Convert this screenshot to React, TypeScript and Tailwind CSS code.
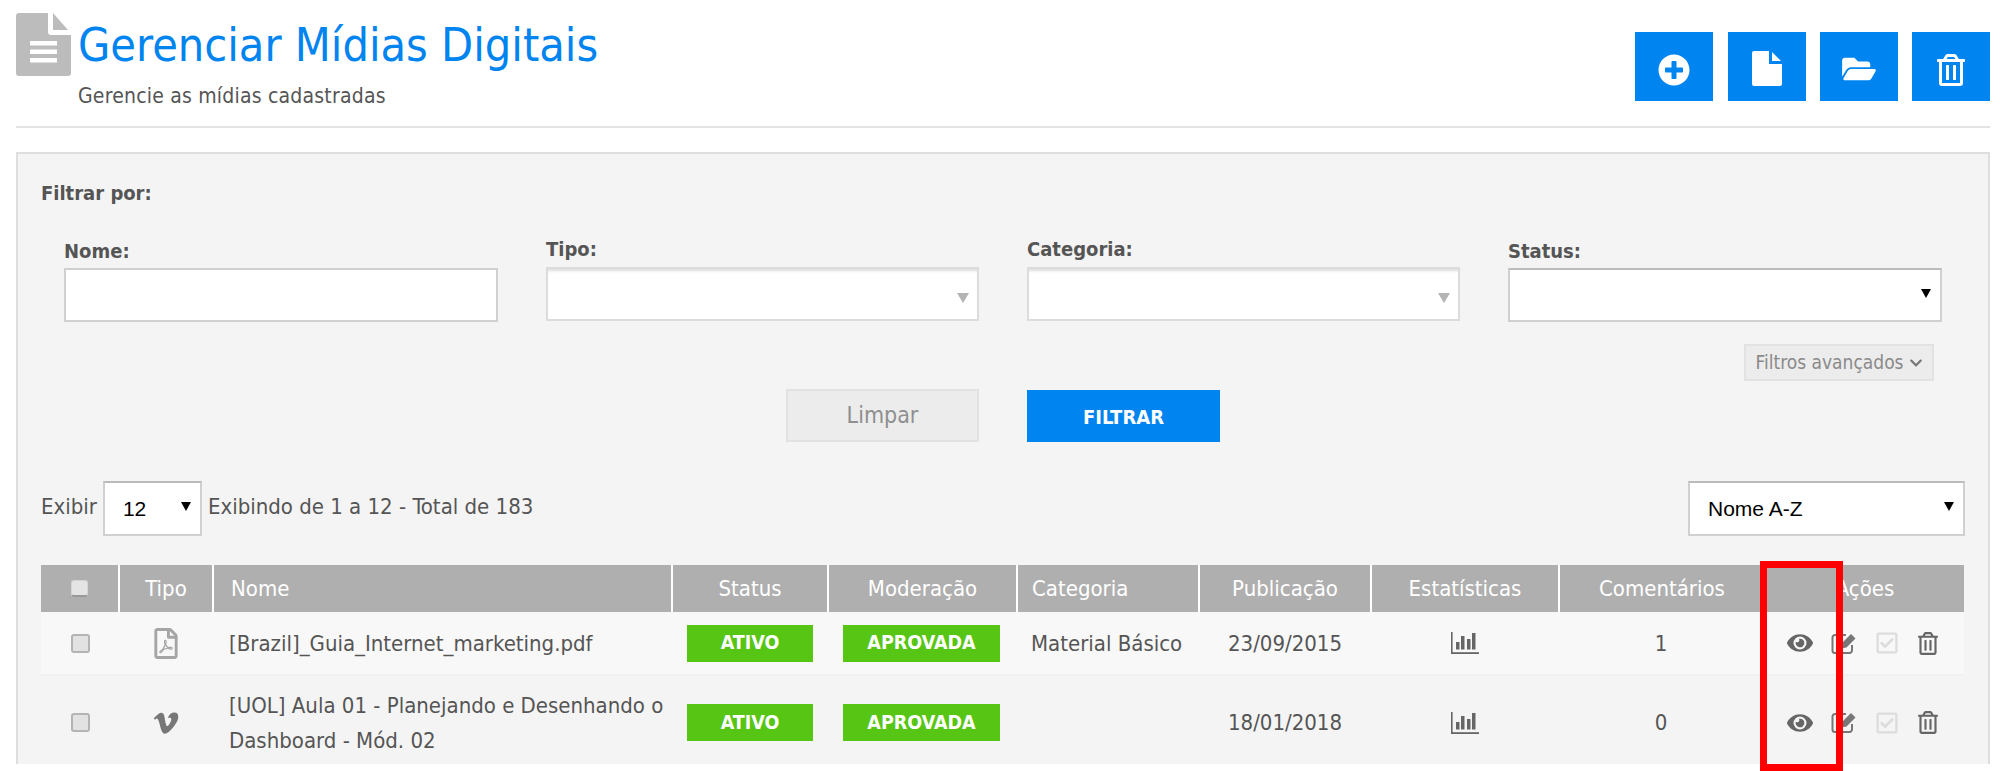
import { FaPlusCircle, FaFolderOpen, FaRegTrashAlt, FaEye, FaRegCheckSquare, FaVimeoV, FaRegFilePdf, FaChevronDown } from "react-icons/fa";

const font = "font-['DejaVu_Sans_Condensed','DejaVu_Sans',sans-serif]";

function Caret({ tone }: { tone: string }) {
  return <span className={`absolute right-[11px] top-[21px] h-0 w-0 border-x-[5px] border-t-[9px] border-x-transparent ${tone}`} />;
}

function Label({ children, className = "" }: { children: string; className?: string }) {
  return <label className={`block text-[20px] leading-[22px] font-bold text-[#555] ${className}`}>{children}</label>;
}

function ChosenBox() {
  return (
    <div className="relative h-[54px] border-2 border-[#dcdcdc] bg-white shadow-[inset_0_4px_3px_-2px_#ddd]">
      <span className="absolute right-[8px] top-[24px] h-0 w-0 border-x-[6px] border-t-[10px] border-x-transparent border-t-[#b4b4b4]" />
    </div>
  );
}

function NativeSelect({ value, className }: { value: string; className: string }) {
  return (
    <div className={`relative ${className}`}>
      <select defaultValue={value} className="h-full w-full appearance-none rounded-none border-2 border-[#d0d0d0] border-t-[#bbb] bg-white pl-[18px] font-['Liberation_Sans',sans-serif] text-[21px] text-black">
        <option value={value}>{value}</option>
      </select>
      <Caret tone="border-t-black" />
    </div>
  );
}

function Badge({ children, w }: { children: string; w: string }) {
  return <span className={`inline-flex h-[37px] items-center justify-center bg-[#57c514] text-[19.5px] font-bold text-white ${w}`}>{children}</span>;
}

function Check({ light = false }: { light?: boolean }) {
  return <span className={`mx-auto block rounded-[3px] ${light ? "h-[17px] w-[17px] border border-b-2 border-[#d4d4d4] border-b-[#999] bg-[#e4e4e4]" : "h-[19px] w-[19px] border-2 border-[#b4b4b4] bg-[#e2e2e2]"}`} />;
}

function EditIcon() {
  return (
    <svg viewBox="0 0 26 21" className="h-[21px] w-[26px] text-[#777]" fill="none">
      <path d="M15 2H4A2.5 2.5 0 0 0 1.5 4.5V17.5A2.5 2.5 0 0 0 4 20H18.5A2.5 2.5 0 0 0 21 17.5V12" stroke="currentColor" strokeWidth="2" />
      <path d="M11 10 20 1l4.5 4.5L15.5 14.5 10 15.5Z" fill="currentColor" />
    </svg>
  );
}

function StatsIcon() {
  return (
    <svg viewBox="0 0 28 22" className="mx-auto h-[22px] w-[28px] text-[#666]" fill="currentColor">
      <rect x="0" y="0" width="1.6" height="22" />
      <rect x="0" y="20.2" width="28" height="1.8" />
      <rect x="5" y="10" width="3.5" height="7.5" />
      <rect x="10" y="4" width="3.5" height="13.5" />
      <rect x="16" y="7" width="3.5" height="10.5" />
      <rect x="21" y="1" width="3.5" height="16.5" />
    </svg>
  );
}

function Actions() {
  return (
    <div className="flex items-center pl-[22px] text-[#666]">
      <FaEye className="h-[26px] w-[26px]" />
      <span className="ml-[18px]"><EditIcon /></span>
      <FaRegCheckSquare className="ml-[18px] h-[24px] w-[24px] text-[#dcdcdc]" />
      <FaRegTrashAlt className="ml-[19px] h-[23px] w-[20px]" />
    </div>
  );
}

const heads: [string, string][] = [
  ["", "w-[78px]"], ["Tipo", "w-[94px]"], ["Nome", "w-[459px] text-left pl-[17px]"], ["Status", "w-[156px]"],
  ["Moderação", "w-[189px]"], ["Categoria", "w-[182px] text-left pl-[14px]"], ["Publicação", "w-[172px]"],
  ["Estatísticas", "w-[188px]"], ["Comentários", "w-[206px]"], ["Ações", "w-[199px]"],
];

function Row({ icon, name, cat, date, count, odd }: { icon: React.ReactNode; name: React.ReactNode; cat: string; date: string; count: string; odd?: boolean }) {
  return (
    <tr className={odd ? "h-[63px] border-b-2 border-[#f0f0f0] bg-[#f8f8f8]" : "h-[94px]"}>
      <td><Check /></td>
      <td className="text-center">{icon}</td>
      <td className="pl-[16px] leading-[35px]">{name}</td>
      <td className="pl-[15px]"><Badge w="w-[126px]">ATIVO</Badge></td>
      <td className="pl-[15px]"><Badge w="w-[157px]">APROVADA</Badge></td>
      <td className="pl-[14px]">{cat}</td>
      <td className="text-center">{date}</td>
      <td><StatsIcon /></td>
      <td className="pr-[2px] text-center">{count}</td>
      <td><Actions /></td>
    </tr>
  );
}

export default function App() {
  return (
    <div className={`relative h-[771px] w-[2000px] overflow-hidden bg-white text-[#555] ${font}`}>
      <div className="pr-[10px] pl-4">
        <header className="flex h-[128px] items-start border-b-2 border-[#e4e4e4]">
          <svg viewBox="0 0 55 63" className="mt-[13px] h-[63px] w-[55px]">
            <path d="M3 0H32V19a3 3 0 0 0 3 3H55V60a3 3 0 0 1-3 3H3a3 3 0 0 1-3-3V3a3 3 0 0 1 3-3Z" fill="#bcbcbc" />
            <path d="M37 0 52 17H37Z" fill="#bcbcbc" />
            <rect x="14" y="28" width="27" height="4.5" fill="#fff" />
            <rect x="14" y="36.5" width="27" height="4.5" fill="#fff" />
            <rect x="14" y="45" width="27" height="4.5" fill="#fff" />
          </svg>
          <div className="ml-[7px] flex-1">
            <h1 className="mt-[20px] text-[46.4px] leading-[50px] text-[#0084f0]">Gerenciar Mídias Digitais</h1>
            <p className="mt-[15px] text-[21px] leading-[22px] tracking-[0.2px] text-[#555]">Gerencie as mídias cadastradas</p>
          </div>
          <div className="mt-[32px] flex text-white">
            <button className="flex h-[69px] w-[78px] items-center justify-center bg-[#0084f0] pt-[7px]"><FaPlusCircle className="h-[32px] w-[32px]" /></button>
            <button className="ml-[15px] flex h-[69px] w-[78px] items-center justify-center bg-[#0084f0] pt-[3px]">
              <svg viewBox="0 0 30 35" className="h-[35px] w-[30px]" fill="#fff">
                <path d="M2 0H17V13H30V33a2 2 0 0 1-2 2H2a2 2 0 0 1-2-2V2a2 2 0 0 1 2-2Z" />
                <path d="M20 1 29 10H20Z" />
              </svg>
            </button>
            <button className="ml-[14px] flex h-[69px] w-[78px] items-center justify-center bg-[#0084f0] pt-[5px]"><FaFolderOpen className="h-[30px] w-[38px]" /></button>
            <button className="ml-[14px] flex h-[69px] w-[78px] items-center justify-center bg-[#0084f0] pt-[7px]"><FaRegTrashAlt className="h-[32px] w-[28px]" /></button>
          </div>
        </header>

        <section className="mt-[24px] h-[612px] overflow-hidden border-2 border-b-0 border-[#dedede] bg-[#f4f4f4] pr-[23px] pl-[23px]">
          <p className="mt-[28px] text-[20px] leading-[22px] font-bold">Filtrar por:</p>
          <div className="mt-[34px] grid grid-cols-[434px_433px_433px_434px] gap-x-[48px] pl-[23px]">
            <div className="pt-[2px]">
              <Label className="mb-[6px]">Nome:</Label>
              <div className="h-[54px] border-2 border-[#d0d0d0] bg-white" />
            </div>
            <div>
              <Label className="mb-[7px]">Tipo:</Label>
              <ChosenBox />
            </div>
            <div>
              <Label className="mb-[7px]">Categoria:</Label>
              <ChosenBox />
            </div>
            <div className="pt-[2px]">
              <Label className="mb-[6px]">Status:</Label>
              <NativeSelect value="" className="h-[54px]" />
            </div>
          </div>
          <div className="mt-[22px] flex justify-end pr-[31px]">
            <button className="flex h-[37px] w-[190px] items-center justify-center gap-[5px] border-2 border-[#e2e2e2] bg-[#ececec] text-[19px] whitespace-nowrap text-[#8a8a8a]">
              Filtros avançados <FaChevronDown className="h-[14px] w-[14px] text-[#777]" />
            </button>
          </div>
          <div className="mt-[8px] flex items-end justify-center gap-x-[48px]">
            <button className="h-[53px] w-[193px] border-2 border-[#e2e2e2] bg-[#ececec] text-[23px] text-[#8f8f8f]">Limpar</button>
            <button className="h-[52px] w-[193px] bg-[#0084f0] pt-[1px] text-[20px] font-bold text-white">FILTRAR</button>
          </div>
          <div className="mt-[39px] flex h-[55px] items-center text-[22px]">
            <span className="pb-[4px]">Exibir</span>
            <NativeSelect value="12" className="ml-[6px] h-[55px] w-[99px]" />
            <span className="ml-[6px] pb-[4px]">Exibindo de 1 a 12 - Total de 183</span>
            <NativeSelect value="Nome A-Z" className="ml-auto h-[55px] w-[277px]" />
          </div>
          <table className="mt-[29px] w-[1923px] table-fixed border-collapse text-[22px]">
            <thead>
              <tr className="h-[47px] bg-[#afafaf] text-[22px] text-white">
                {heads.map(([h, c], i) => (
                  <th key={i} className={`border-l-2 border-white font-normal first:border-l-0 ${c}`}>{i === 0 ? <Check light /> : h}</th>
                ))}
              </tr>
            </thead>
            <tbody>
              <Row odd icon={<FaRegFilePdf className="mx-auto h-[31px] w-[24px] text-[#a5a5a5]" />} name="[Brazil]_Guia_Internet_marketing.pdf" cat="Material Básico" date="23/09/2015" count="1" />
              <Row icon={<FaVimeoV className="mx-auto h-[28px] w-[30px] text-[#777]" />} name={<>[UOL] Aula 01 - Planejando e Desenhando o<br />Dashboard - Mód. 02</>} cat="" date="18/01/2018" count="0" />
            </tbody>
          </table>
        </section>
      </div>
      <div className="absolute top-[561px] left-[1760px] h-[210px] w-[83px] border-[7px] border-[#ff0000]" />
    </div>
  );
}
